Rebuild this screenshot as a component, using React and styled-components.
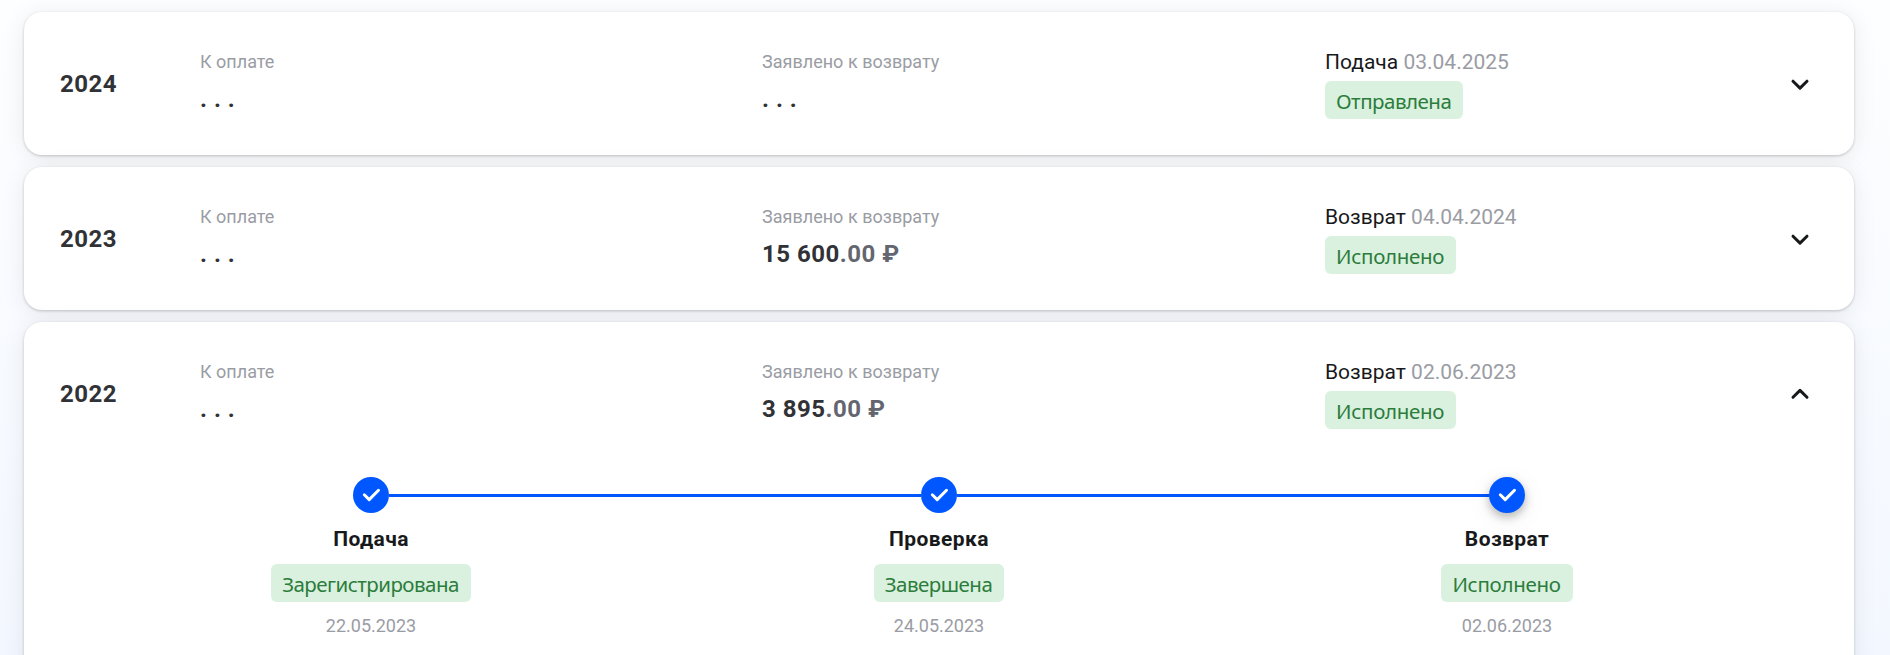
import React from "react";
import styled, { createGlobalStyle } from "styled-components";

const declarations = [
  {
    year: "2024",
    stage: "Подача",
    date: "03.04.2025",
    status: "Отправлена",
  },
  {
    year: "2023",
    refund: "15 600",
    stage: "Возврат",
    date: "04.04.2024",
    status: "Исполнено",
  },
  {
    year: "2022",
    refund: "3 895",
    stage: "Возврат",
    date: "02.06.2023",
    status: "Исполнено",
    steps: [
      { title: "Подача", status: "Зарегистрирована", date: "22.05.2023" },
      { title: "Проверка", status: "Завершена", date: "24.05.2023" },
      { title: "Возврат", status: "Исполнено", date: "02.06.2023" },
    ],
  },
];

const spacing = {
  Отправлена: "-0.5px",
  Исполнено: "-0.3px",
  Зарегистрирована: "-0.53px",
  Завершена: "-0.5px",
};

const Status = ({ children }) => (
  <Badge $spacing={spacing[children]}>{children}</Badge>
);

const Amount = ({ value }) =>
  value ? (
    <Value>
      {value}
      <Fraction>.00 ₽</Fraction>
    </Value>
  ) : (
    <Value>. . .</Value>
  );

const Chevron = ({ open }) => (
  <Toggle aria-label={open ? "Свернуть" : "Развернуть"}>
    <svg width="24" height="24" viewBox="0 0 24 24" fill="none">
      <path
        d={open ? "M5 15.3L12 8.4L19 15.3" : "M5 9.2L12 16.1L19 9.2"}
        stroke="#18191b"
        strokeWidth="3"
        strokeLinecap="round"
        strokeLinejoin="round"
      />
    </svg>
  </Toggle>
);

const Step = ({ step, first, last }) => (
  <StepColumn>
    <Track>
      <Line $hidden={first} />
      <Circle $current={last}>
        <svg width="36" height="36" viewBox="0 0 36 36" fill="none">
          <path
            d="M11.3 17.8L16.2 22.6L25.5 13.3"
            stroke="#fff"
            strokeWidth="3"
            strokeLinecap="round"
            strokeLinejoin="round"
          />
        </svg>
      </Circle>
      <Line $hidden={last} />
    </Track>
    <StepTitle>{step.title}</StepTitle>
    <Status>{step.status}</Status>
    <StepDate>{step.date}</StepDate>
  </StepColumn>
);

const Declaration = ({ item }) => (
  <Card $open={Boolean(item.steps)}>
    <Summary>
      <Year>{item.year}</Year>
      <Cell>
        <Label>К оплате</Label>
        <Amount />
      </Cell>
      <Cell>
        <Label>Заявлено к возврату</Label>
        <Amount value={item.refund} />
      </Cell>
      <Cell>
        <Stage>
          {item.stage} <StageDate>{item.date}</StageDate>
        </Stage>
        <Status>{item.status}</Status>
      </Cell>
      <Chevron open={Boolean(item.steps)} />
    </Summary>
    {item.steps && (
      <Steps>
        {item.steps.map((step, i) => (
          <Step
            key={step.title}
            step={step}
            first={i === 0}
            last={i === item.steps.length - 1}
          />
        ))}
      </Steps>
    )}
  </Card>
);

const App = () => {
  return (
    <>
      <GlobalStyle />
      <Page>
        {declarations.map((item) => (
          <Declaration key={item.year} item={item} />
        ))}
      </Page>
    </>
  );
};

export default App;

const GlobalStyle = createGlobalStyle`
  * {
    box-sizing: border-box;
  }

  body {
    margin: 0;
    font-family: Roboto, "Liberation Sans", sans-serif;
    color: #18191b;
  }
`;

const Page = styled.main`
  height: 655px;
  padding: 12px 36px 0 24px;
  display: flex;
  flex-direction: column;
  gap: 12px;
  overflow: hidden;
  background: linear-gradient(180deg, #fdfeff 0%, #f3f7ff 100%);
`;

const Card = styled.section`
  flex: none;
  height: ${(props) => (props.$open ? "360px" : "143px")};
  border-radius: 18px;
  background: #fff;
  box-shadow: 0 1px 3px rgba(0, 0, 0, 0.2), 0 3px 24px rgba(0, 0, 0, 0.08);
`;

const Summary = styled.div`
  height: 143px;
  padding: 0 36px;
  display: grid;
  grid-template-columns: 140px 562px 563px 1fr 36px;
`;

const Year = styled.div`
  align-self: center;
  font-size: 24px;
  line-height: 30px;
  font-weight: bold;
  letter-spacing: 0.5px;
  color: #303236;
`;

const Cell = styled.div`
  padding-top: 36px;
  display: flex;
  flex-direction: column;
  align-items: flex-start;
`;

const Label = styled.div`
  height: 33px;
  font-size: 18px;
  line-height: 27px;
  letter-spacing: 0.02px;
  color: #9a9ca4;
`;

const Value = styled.div`
  font-size: 24px;
  line-height: 36px;
  font-weight: bold;
  letter-spacing: 0.5px;
  color: #303236;
`;

const Fraction = styled.span`
  color: #63666f;
`;

const Stage = styled.div`
  height: 33px;
  font-size: 21px;
  line-height: 29px;
`;

const StageDate = styled.span`
  color: #9a9ca4;
`;

const Badge = styled.div`
  height: 38px;
  padding: 0 12px 0 11px;
  border-radius: 6px;
  background: #d9f1de;
  color: #2c7c3c;
  font-family: "Noto Sans", "Open Sans", sans-serif;
  font-size: 20.5px;
  line-height: 41px;
  letter-spacing: ${(props) => props.$spacing || "normal"};
  white-space: nowrap;
`;

const Toggle = styled.button`
  align-self: center;
  width: 36px;
  height: 36px;
  padding: 0;
  border: none;
  background: none;
  display: flex;
  align-items: center;
  justify-content: center;
  cursor: pointer;
`;

const Steps = styled.div`
  padding: 12px 63px 0;
  display: grid;
  grid-template-columns: repeat(3, 1fr);
`;

const StepColumn = styled.div`
  display: flex;
  flex-direction: column;
  align-items: center;
`;

const Track = styled.div`
  width: 100%;
  height: 36px;
  display: flex;
  align-items: center;
`;

const Line = styled.div`
  flex: 1;
  height: 3px;
  margin-top: 1px;
  background: ${(props) => (props.$hidden ? "transparent" : "#0057ff")};
`;

const Circle = styled.div`
  width: 36px;
  height: 36px;
  border-radius: 50%;
  background: #0057ff;
  box-shadow: ${(props) =>
    props.$current
      ? "0 4px 10px rgba(0, 0, 0, 0.28), 0 6px 30px rgba(0, 0, 0, 0.06)"
      : "none"};
`;

const StepTitle = styled.div`
  margin-top: 13px;
  height: 38px;
  font-size: 21px;
  line-height: 27px;
  font-weight: bold;
  letter-spacing: 0.4px;
`;

const StepDate = styled.div`
  margin-top: 10px;
  font-size: 18px;
  line-height: 27px;
  color: #9a9ca4;
`;
